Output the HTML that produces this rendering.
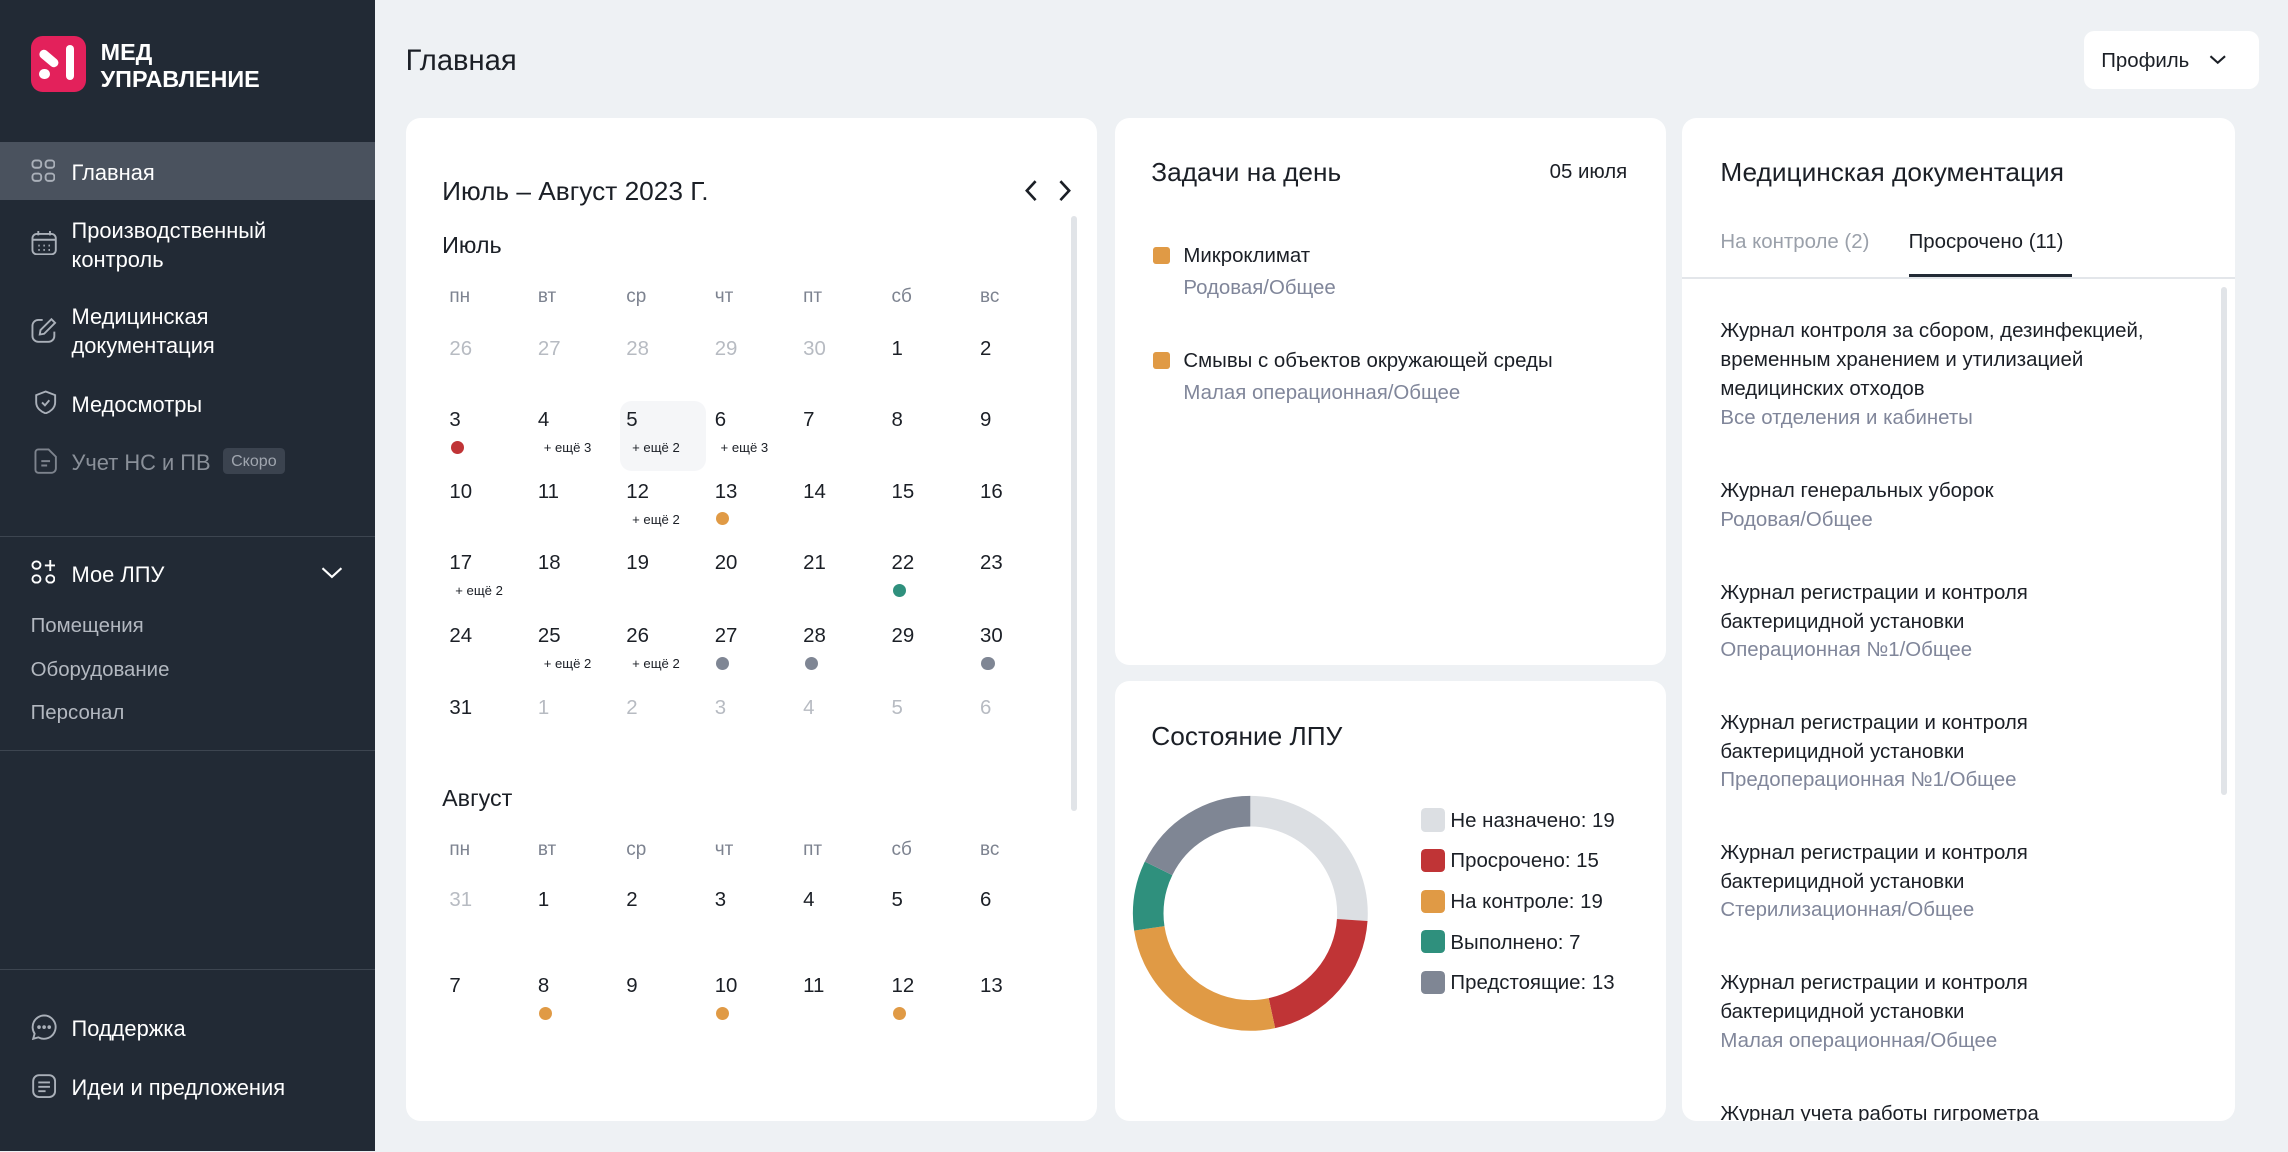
<!DOCTYPE html>
<html><head><meta charset="utf-8"><style>
*{margin:0;padding:0;box-sizing:border-box}
html,body{width:2288px;height:1152px;overflow:hidden;background:#eef1f4}
#w{zoom:1.459184;width:1568px;height:789px;position:relative;font-family:"Liberation Sans","Noto Sans CJK SC",sans-serif;color:#1b1f26}
.a{position:absolute;white-space:nowrap}
.sb{position:absolute;left:0;top:0;width:257px;height:789px;background:#222a35;color:#fff}
.nav{font-size:15px;line-height:20px;color:#fff}
.ic{position:absolute;left:21px}
.card{position:absolute;background:#fff;border-radius:10px}
.wd{font-size:13px;color:#7d8390}
.n{font-size:14px;color:#1b1f26}
.g{color:#b7bbc2}
.m{font-size:9px;color:#1b1f26}
.dot{position:absolute;width:9px;height:9px;border-radius:50%}
.t{font-size:14px;line-height:20px;color:#1b1f26}
.s{font-size:14px;line-height:20px;color:#80869a}
</style></head><body><div id="w">
<div class="sb">
 <div class="a" style="left:21px;top:25px;width:38px;height:38px;background:#e3215b;border-radius:8px"></div>
 <div class="a" style="left:26px;top:37px;width:15px;height:6px;border-radius:3px;background:#fff;transform:rotate(40deg)"></div>
 <div class="a" style="left:27px;top:47px;width:7px;height:7px;border-radius:50%;background:#fff"></div>
 <div class="a" style="left:45px;top:31px;width:6px;height:24px;border-radius:3px;background:#fff"></div>
 <div class="a" style="left:69px;top:27px;font-size:16px;line-height:18px;font-weight:bold">МЕД<br>УПРАВЛЕНИЕ</div>
 <div class="a" style="left:0;top:97px;width:257px;height:40px;background:#4a525e"></div>
 <svg class="ic" style="top:109px" width="17" height="16" viewBox="0 0 17 16" fill="none" stroke="#aab0b9" stroke-width="1.3"><rect x="1" y="1" width="6" height="5" rx="2"/><rect x="10" y="1" width="6" height="5" rx="2"/><rect x="1" y="10" width="6" height="5" rx="2"/><rect x="10" y="10" width="6" height="5" rx="2"/></svg>
 <div class="a nav" style="left:49px;top:108px">Главная</div>
 <svg class="ic" style="top:158px" width="18" height="17" viewBox="0 0 18 17" fill="none" stroke="#aab0b9" stroke-width="1.3"><rect x="1" y="2" width="16" height="14" rx="3"/><path d="M1 6h16M5 0v3M13 0v3"/><path d="M5 10h1M8.5 10h1M12 10h1M5 13h1M8.5 13h1M12 13h1"/></svg>
 <div class="a nav" style="left:49px;top:148px">Производственный<br>контроль</div>
 <svg class="ic" style="top:217px" width="18" height="18" viewBox="0 0 18 18" fill="none" stroke="#aab0b9" stroke-width="1.3"><path d="M8 2H5a4 4 0 0 0-4 4v7a4 4 0 0 0 4 4h7a4 4 0 0 0 4-4v-3"/><path d="M14 1.5l2.5 2.5L9 11.5 6 12l.5-3z"/></svg>
 <div class="a nav" style="left:49px;top:207px">Медицинская<br>документация</div>
 <svg class="ic" style="top:267px;left:23px" width="16" height="17" viewBox="0 0 16 17" fill="none" stroke="#aab0b9" stroke-width="1.3"><path d="M8 1l6.5 2.5v5c0 4-3.5 6.5-6.5 7.5C5 15 1.5 12.5 1.5 8.5v-5z"/><path d="M5.5 8.5l2 2 3-3.5"/></svg>
 <div class="a nav" style="left:49px;top:267px">Медосмотры</div>
 <svg class="ic" style="top:307px;left:23px" width="16" height="18" viewBox="0 0 16 18" fill="none" stroke="#7d838d" stroke-width="1.3"><path d="M3 1h7l5 5v8a3 3 0 0 1-3 3H3a2 2 0 0 1-2-2V3a2 2 0 0 1 2-2z"/><path d="M5 9h6M5 12h4"/></svg>
 <div class="a nav" style="left:49px;top:307px;color:#8a9099">Учет НС и ПВ</div>
 <div class="a" style="left:153px;top:307px;width:42px;height:18px;background:#3b434f;border-radius:3px;font-size:11px;line-height:18px;color:#a0a6af;text-align:center">Скоро</div>
 <div class="a" style="left:0;top:367px;width:257px;height:1px;background:#3d4550"></div>
 <svg class="ic" style="top:384px" width="17" height="17" viewBox="0 0 17 17" fill="none" stroke="#fff" stroke-width="1.3"><rect x="1" y="1" width="5.5" height="5" rx="2.5"/><rect x="1" y="10.5" width="5.5" height="5" rx="2.5"/><rect x="10.5" y="10.5" width="5.5" height="5" rx="2.5"/><path d="M13.2 0v7.5M9.5 3.7h7.5"/></svg>
 <div class="a nav" style="left:49px;top:384px">Мое ЛПУ</div>
 <svg class="a" style="left:220px;top:388px" width="15" height="9" viewBox="0 0 15 9" fill="none" stroke="#fff" stroke-width="1.4"><path d="M1 1.5l6.5 6 6.5-6"/></svg>
 <div class="a" style="left:21px;top:420px;font-size:14px;line-height:18px;color:#b3b8c0">Помещения</div>
 <div class="a" style="left:21px;top:450px;font-size:14px;line-height:18px;color:#b3b8c0">Оборудование</div>
 <div class="a" style="left:21px;top:480px;font-size:14px;line-height:18px;color:#b3b8c0">Персонал</div>
 <div class="a" style="left:0;top:514px;width:257px;height:1px;background:#3d4550"></div>
 <div class="a" style="left:0;top:664px;width:257px;height:1px;background:#3d4550"></div>
 <svg class="ic" style="top:695px" width="18" height="18" viewBox="0 0 18 18" fill="none" stroke="#aab0b9" stroke-width="1.3"><path d="M9 1a8 8 0 1 1-4 15l-3.5 1 1-3.5A8 8 0 0 1 9 1z"/><circle cx="5.5" cy="9" r=".6" fill="#aab0b9"/><circle cx="9" cy="9" r=".6" fill="#aab0b9"/><circle cx="12.5" cy="9" r=".6" fill="#aab0b9"/></svg>
 <div class="a nav" style="left:49px;top:695px">Поддержка</div>
 <svg class="ic" style="top:735px" width="18" height="18" viewBox="0 0 18 18" fill="none" stroke="#aab0b9" stroke-width="1.3"><rect x="1.5" y="1.5" width="15" height="15" rx="4"/><path d="M5 6.5h8M5 9.5h8M5 12.5h5"/></svg>
 <div class="a nav" style="left:49px;top:735px">Идеи и предложения</div>
</div>

<div class="a" style="left:278px;top:30px;font-size:20px;line-height:24px">Главная</div>
<div class="a" style="left:1428px;top:21px;width:120px;height:40px;background:#fff;border-radius:7px"></div>
<div class="a" style="left:1440px;top:32px;font-size:14px;line-height:20px">Профиль</div>
<svg class="a" style="left:1514px;top:37px" width="12" height="8" viewBox="0 0 12 8" fill="none" stroke="#1b1f26" stroke-width="1.4"><path d="M1 1.5l5 4.5 5-4.5"/></svg>

<div class="card" style="left:278px;top:81px;width:474px;height:687px"></div>
<div class="a" style="left:303px;top:119px;font-size:18px;line-height:24px">Июль – Август 2023 Г.</div>
<svg class="a" style="left:700px;top:123px" width="40" height="16" viewBox="0 0 40 16" fill="none" stroke="#1b1f26" stroke-width="1.8"><path d="M10 1.5L4 8l6 6.5M27 1.5L33 8l-6 6.5"/></svg>
<div class="a" style="left:734px;top:148px;width:4px;height:408px;border-radius:2px;background:#e1e4e8"></div>
<div class="a" style="left:303px;top:157px;font-size:16px;line-height:22px">Июль</div>
<div class="a" style="left:425px;top:275px;width:59px;height:48px;background:#f5f6f8;border-radius:8px"></div>
<div class="a" style="left:303px;top:536px;font-size:16px;line-height:22px">Август</div>

<div class="card" style="left:764px;top:81px;width:378px;height:375px"></div>
<div class="a" style="left:789px;top:106px;font-size:18px;line-height:24px">Задачи на день</div>
<div class="a" style="left:1062px;top:108px;font-size:14px;line-height:20px">05 июля</div>
<div class="a" style="left:790px;top:169px;width:12px;height:12px;border-radius:2px;background:#e09a45"></div>
<div class="a t" style="left:811px;top:166px">Микроклимат</div>
<div class="a s" style="left:811px;top:188px">Родовая/Общее</div>
<div class="a" style="left:790px;top:241px;width:12px;height:12px;border-radius:2px;background:#e09a45"></div>
<div class="a t" style="left:811px;top:238px">Смывы с объектов окружающей среды</div>
<div class="a s" style="left:811px;top:260px">Малая операционная/Общее</div>

<div class="card" style="left:764px;top:467px;width:378px;height:301px"></div>
<div class="a" style="left:789px;top:493px;font-size:18px;line-height:24px">Состояние ЛПУ</div>
<svg class="a" style="left:767px;top:536px" width="180" height="180" viewBox="0 0 180 180">
<g transform="rotate(-90 90 90)" fill="none" stroke-width="21">
<circle cx="90" cy="90" r="70" stroke="#dcdfe3" stroke-dasharray="114.5 500" stroke-dashoffset="0"/>
<circle cx="90" cy="90" r="70" stroke="#c03436" stroke-dasharray="90.4 500" stroke-dashoffset="-114.5"/>
<circle cx="90" cy="90" r="70" stroke="#e09a45" stroke-dasharray="114.5 500" stroke-dashoffset="-204.9"/>
<circle cx="90" cy="90" r="70" stroke="#2f907d" stroke-dasharray="42.2 500" stroke-dashoffset="-319.4"/>
<circle cx="90" cy="90" r="70" stroke="#7f8694" stroke-dasharray="78.3 500" stroke-dashoffset="-361.6"/>
</g></svg>

<div class="card" style="left:1153px;top:81px;width:379px;height:687px;overflow:hidden"></div>
<div class="a" style="left:1179px;top:106px;font-size:18px;line-height:24px">Медицинская документация</div>
<div class="a" style="left:1179px;top:156px;font-size:14px;line-height:20px;color:#9aa0aa">На контроле (2)</div>
<div class="a" style="left:1308px;top:156px;font-size:14px;line-height:20px">Просрочено (11)</div>
<div class="a" style="left:1153px;top:190px;width:379px;height:1px;background:#e3e6ea"></div>
<div class="a" style="left:1308px;top:188px;width:112px;height:2px;background:#222a35"></div>
<div class="a" style="left:1522px;top:197px;width:4px;height:348px;border-radius:2px;background:#e1e4e8"></div>
<div class="a" style="left:1153px;top:200px;width:360px;height:568px;overflow:hidden">
<div class="a t" style="left:26px;top:17px">Журнал контроля за сбором, дезинфекцией,<br>временным хранением и утилизацией<br>медицинских отходов</div>
<div class="a s" style="left:26px;top:77px">Все отделения и кабинеты</div>
<div class="a t" style="left:26px;top:127px">Журнал генеральных уборок</div>
<div class="a s" style="left:26px;top:147px">Родовая/Общее</div>
<div class="a t" style="left:26px;top:197px">Журнал регистрации и контроля<br>бактерицидной установки</div>
<div class="a s" style="left:26px;top:236px">Операционная №1/Общее</div>
<div class="a t" style="left:26px;top:286px">Журнал регистрации и контроля<br>бактерицидной установки</div>
<div class="a s" style="left:26px;top:325px">Предоперационная №1/Общее</div>
<div class="a t" style="left:26px;top:375px">Журнал регистрации и контроля<br>бактерицидной установки</div>
<div class="a s" style="left:26px;top:414px">Стерилизационная/Общее</div>
<div class="a t" style="left:26px;top:464px">Журнал регистрации и контроля<br>бактерицидной установки</div>
<div class="a s" style="left:26px;top:504px">Малая операционная/Общее</div>
<div class="a t" style="left:26px;top:554px">Журнал учета работы гигрометра</div>
</div>
</div>
<script>
(function(){
var w=document.getElementById('w');
function add(h){w.insertAdjacentHTML('beforeend',h)}
var wd=['пн','вт','ср','чт','пт','сб','вс'];
function X(i){return 308+60.6*i}
function month(wdY,rows){
 wd.forEach(function(d,i){add('<div class="a wd" style="left:'+X(i)+'px;top:'+(wdY-7)+'px;line-height:16px">'+d+'</div>')});
 rows.forEach(function(r){r.c.forEach(function(c,i){
  var cls=c[1]?'n g':'n';
  add('<div class="a '+cls+'" style="left:'+X(i)+'px;top:'+(r.y-8)+'px;line-height:18px">'+c[0]+'</div>');
  if(c[2]){ if(c[2][0]=='+') add('<div class="a m" style="left:'+(X(i)+4)+'px;top:'+(r.y+14)+'px;line-height:12px">'+c[2]+'</div>');
   else add('<div class="dot" style="left:'+(X(i)+1)+'px;top:'+(r.y+15)+'px;background:'+c[2]+'"></div>');}
 })});
}
var R='#c03436',O='#e09a45',T='#2f907d',G='#7f8694';
month(202,[
{y:238,c:[[26,1],[27,1],[28,1],[29,1],[30,1],[1],[2]]},
{y:287,c:[[3,0,R],[4,0,'+ ещё 3'],[5,0,'+ ещё 2'],[6,0,'+ ещё 3'],[7],[8],[9]]},
{y:336,c:[[10],[11],[12,0,'+ ещё 2'],[13,0,O],[14],[15],[16]]},
{y:385,c:[[17,0,'+ ещё 2'],[18],[19],[20],[21],[22,0,T],[23]]},
{y:435,c:[[24],[25,0,'+ ещё 2'],[26,0,'+ ещё 2'],[27,0,G],[28,0,G],[29],[30,0,G]]},
{y:484,c:[[31],[1,1],[2,1],[3,1],[4,1],[5,1],[6,1]]}
]);
month(581,[
{y:616,c:[[31,1],[1],[2],[3],[4],[5],[6]]},
{y:675,c:[[7],[8,0,O],[9],[10,0,O],[11],[12,0,O],[13]]}
]);
var L=[['#dcdfe3','Не назначено: 19'],[R,'Просрочено: 15'],[O,'На контроле: 19'],[T,'Выполнено: 7'],[G,'Предстоящие: 13']];
L.forEach(function(l,i){var y=562+27.8*i;
 add('<div class="a" style="left:974px;top:'+(y-8)+'px;width:16px;height:16px;border-radius:3px;background:'+l[0]+'"></div>');
 add('<div class="a t" style="left:994px;top:'+(y-9)+'px">'+l[1]+'</div>');});
})();
</script>
</body></html>
